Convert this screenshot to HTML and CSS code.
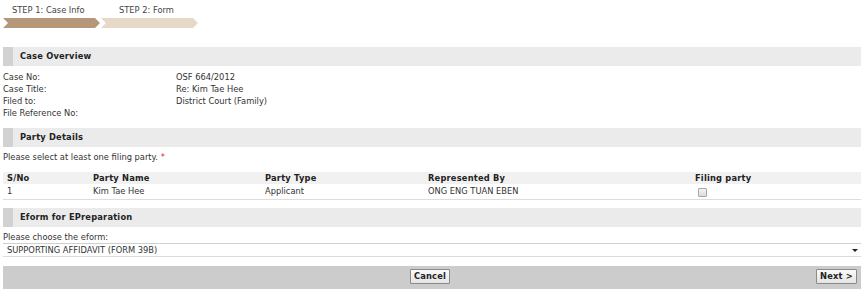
FILE: index.html
```html
<!DOCTYPE html>
<html>
<head>
<meta charset="utf-8">
<title>Case Info</title>
<link rel="stylesheet" href="styles.css">
</head>
<body>
<div class="page">
  <div class="steps">
    <div class="step-labels">
      <span class="step-label step-label-1">STEP 1: Case Info</span>
      <span class="step-label">STEP 2: Form</span>
    </div>
    <div class="step-bar">
      <span class="chevron chevron-active"></span>
      <span class="chevron chevron-next"></span>
    </div>
  </div>

  <div class="section-head">Case Overview</div>
  <div class="info">
    <span>Case No:</span><span>OSF 664/2012</span>
    <span>Case Title:</span><span>Re: Kim Tae Hee</span>
    <span>Filed to:</span><span>District Court (Family)</span>
    <span>File Reference No:</span><span></span>
  </div>

  <div class="section-head section-gap">Party Details</div>
  <div class="note">Please select at least one filing party. <span class="req">*</span></div>
  <div class="party-table">
    <div class="row row-head">
      <span>S/No</span><span>Party Name</span><span>Party Type</span><span>Represented By</span><span>Filing party</span>
    </div>
    <div class="row">
      <span>1</span><span>Kim Tae Hee</span><span>Applicant</span><span>ONG ENG TUAN EBEN</span><span><input type="checkbox" class="check"></span>
    </div>
  </div>

  <div class="section-head section-gap-2">Eform for EPreparation</div>
  <div class="note note-eform">Please choose the eform:</div>
  <div class="select-wrap">
    <span class="select-text">SUPPORTING AFFIDAVIT (FORM 39B)</span>
  </div>

  <div class="actions">
    <span></span>
    <button class="btn" type="button">Cancel</button>
    <button class="btn btn-next" type="button">Next &gt;</button>
  </div>
</div>
</body>
</html>
```

FILE: styles.css
```css
html, body {
  margin: 0;
  padding: 0;
  background: #ffffff;
}
body {
  font-family: "DejaVu Sans", Verdana, sans-serif;
  font-size: 8.3px;
  color: #333333;
  line-height: 12px;
}
.page {
  padding-left: 3px;
  width: 858px;
  overflow: hidden;
}
.steps {
  padding-top: 4px;
}
.step-labels {
  display: flex;
  height: 12px;
  color: #444;
}
.step-label-1 {
  padding-left: 9px;
  width: 107px;
}
.step-bar {
  display: flex;
  gap: 1px;
  margin-top: 2px;
}
.chevron {
  display: block;
  width: 97px;
  height: 10px;
  clip-path: polygon(0 0, calc(100% - 5px) 0, 100% 50%, calc(100% - 5px) 100%, 0 100%, 5px 50%);
}
.chevron-active {
  background: #b7977a;
}
.chevron-next {
  background: #e6d9c8;
}
.section-head {
  margin-top: 19px;
  height: 19px;
  line-height: 19px;
  background: #ebebeb;
  border-left: 10px solid #d2d2d2;
  padding-left: 7px;
  font-weight: bold;
  letter-spacing: 0.2px;
  color: #222;
}
.section-gap {
  margin-top: 9px;
}
.section-gap-2 {
  margin-top: 8px;
}
.info {
  display: grid;
  grid-template-columns: 173px 1fr;
  margin-top: 5px;
}
.note {
  margin-top: 4px;
}
.req {
  color: #d03030;
}
.party-table {
  margin-top: 9px;
  border-bottom: 1px solid #dddddd;
  padding-bottom: 3px;
}
.row {
  display: grid;
  grid-template-columns: 86px 172px 163px 267px 1fr;
  padding-left: 4px;
  height: 12px;
  align-items: center;
}
.row-head {
  background: #f1f1f1;
  font-weight: bold;
  letter-spacing: 0.2px;
  color: #222;
}
.check {
  appearance: none;
  -webkit-appearance: none;
  display: block;
  width: 9px;
  height: 9px;
  margin: 4px 0 0 3px;
  border: 1px solid #a8a8a8;
  background: linear-gradient(#f4f4f4, #dcdcdc);
  border-radius: 1px;
}
.note-eform {
  margin-top: 4px;
}
.select-wrap {
  position: relative;
  height: 12px;
  border-top: 1px solid #cfcfcf;
  border-bottom: 1px solid #dcdcdc;
  padding-left: 4px;
  line-height: 12px;
}
.select-wrap::after {
  content: "";
  position: absolute;
  right: 3px;
  top: 5px;
  border-left: 3px solid transparent;
  border-right: 3px solid transparent;
  border-top: 3px solid #222;
}
.actions {
  margin-top: 9px;
  height: 24px;
  background: #cccccc;
  display: grid;
  grid-template-columns: 1fr auto 1fr;
  align-items: start;
  padding-top: 3px;
  box-sizing: border-box;
  padding-right: 4px;
}
.btn {
  font-family: "DejaVu Sans", Verdana, sans-serif;
  font-size: 8.3px;
  font-weight: bold;
  letter-spacing: 0.2px;
  color: #222;
  height: 15px;
  line-height: 11px;
  padding: 0 3px;
  margin: 0;
  background: linear-gradient(#fafafa, #e4e4e4);
  border: 1px solid #8a8a8a;
  border-radius: 1px;
}
.btn-next {
  justify-self: end;
}
```
